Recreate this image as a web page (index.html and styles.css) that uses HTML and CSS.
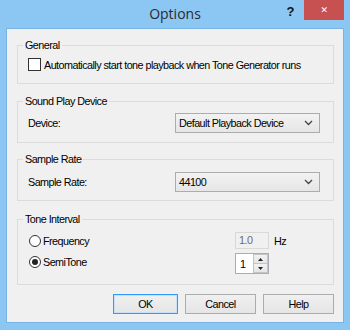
FILE: index.html
```html
<!DOCTYPE html>
<html lang="en">
<head>
    <meta charset="UTF-8">
    <title>Options</title>
    <link rel="stylesheet" href="styles.css">
</head>
<body>
    <div class="window">
        <div class="titlebar">
            <div></div>
            <div class="title">Options</div>
            <div class="controls">
                <span class="help-btn">?</span>
                <span class="close-btn">&#x2715;</span>
            </div>
        </div>
        <div class="client">
            <div class="group general">
                <div class="caption">General</div>
                <label class="row check-row">
                    <span class="checkbox"></span>
                    Automatically start tone playback when Tone Generator runs
                </label>
            </div>

            <div class="group device">
                <div class="caption">Sound Play Device</div>
                <div class="row field-row">
                    <span class="field-label">Device:</span>
                    <div class="combo">
                        <span>Default Playback Device</span>
                        <svg width="9" height="6" viewBox="0 0 9 6"><polyline points="1,1 4.5,4.5 8,1" fill="none" stroke="#444" stroke-width="1.3"/></svg>
                    </div>
                </div>
            </div>

            <div class="group rate">
                <div class="caption">Sample Rate</div>
                <div class="row field-row">
                    <span class="field-label">Sample Rate:</span>
                    <div class="combo">
                        <span>44100</span>
                        <svg width="9" height="6" viewBox="0 0 9 6"><polyline points="1,1 4.5,4.5 8,1" fill="none" stroke="#444" stroke-width="1.3"/></svg>
                    </div>
                </div>
            </div>

            <div class="group interval">
                <div class="caption">Tone Interval</div>
                <div class="row radio-row first">
                    <label class="radio-label"><span class="radio"></span>Frequency</label>
                    <div class="textbox disabled">1.0</div>
                    <span class="unit">Hz</span>
                </div>
                <div class="row radio-row second">
                    <label class="radio-label"><span class="radio checked"></span>SemiTone</label>
                    <div class="spinbox">
                        <span class="spin-value">1</span>
                        <div class="spin-buttons">
                            <span class="spin up"><svg width="5" height="3" viewBox="0 0 5 3"><polygon points="0,3 2.5,0 5,3" fill="#222"/></svg></span>
                            <span class="spin down"><svg width="5" height="3" viewBox="0 0 5 3"><polygon points="0,0 2.5,3 5,0" fill="#222"/></svg></span>
                        </div>
                    </div>
                </div>
            </div>

            <div class="buttons">
                <button class="btn default ok">OK</button>
                <button class="btn cancel">Cancel</button>
                <button class="btn help">Help</button>
            </div>
        </div>
    </div>
</body>
</html>
```

FILE: styles.css
```css
body {
    margin: 0;
    font-family: "Liberation Sans", Arial, sans-serif;
    font-size: 10.8px;
    letter-spacing: -0.55px;
    color: #000;
    white-space: nowrap;
}
.window {
    width: 350px;
    height: 330px;
    background-color: #8cc7f4;
    box-sizing: border-box;
    overflow: hidden;
}
.titlebar {
    height: 28px;
    display: grid;
    grid-template-columns: 1fr auto 1fr;
}
.title {
    font-family: "Open Sans", sans-serif;
    font-size: 14px;
    letter-spacing: 0;
    color: #2a2a2a;
    line-height: 28px;
}
.controls {
    display: flex;
    justify-content: flex-end;
    align-items: flex-start;
    margin-right: 6px;
}
.help-btn {
    font-weight: bold;
    font-size: 13px;
    color: #111;
    margin: 4px 10px 0 0;
}
.close-btn {
    width: 40px;
    height: 20px;
    background-color: #c75050;
    color: #fff;
    font-family: "DejaVu Sans", sans-serif;
    font-size: 9px;
    font-weight: bold;
    text-align: center;
    line-height: 20px;
}
.client {
    margin: 0 6px;
    height: 295px;
    box-sizing: border-box;
    background-color: #f0f0f0;
    border: 1px solid #78b3e2;
    padding: 0 9px 0 10px;
    display: flex;
    flex-direction: column;
}
.group {
    border: 1px solid #dcdcdc;
    box-sizing: border-box;
    display: flex;
    flex-direction: column;
}
.caption {
    width: fit-content;
    margin: -8px 0 0 5px;
    padding: 0 2px;
    line-height: 15px;
    background-color: #f0f0f0;
}
.general { margin-top: 16px; height: 39px; }
.device { margin-top: 17px; height: 42px; }
.rate { margin-top: 16px; height: 42px; }
.interval { margin-top: 18px; height: 66px; }

.row {
    display: flex;
    align-items: center;
}
.check-row {
    margin: 5px 0 0 10px;
    height: 13px;
}
.checkbox {
    flex-shrink: 0;
    width: 11px;
    height: 11px;
    border: 1px solid #333;
    background-color: #fff;
    margin-right: 3px;
}
.field-row {
    margin: 4px 0 0 10px;
    height: 20px;
}
.rate .field-row { margin-top: 5px; }
.field-label {
    width: 147px;
}
.combo {
    width: 145px;
    height: 20px;
    box-sizing: border-box;
    border: 1px solid #acacac;
    background: linear-gradient(#f2f2f2, #e6e6e6);
    display: flex;
    align-items: center;
    justify-content: space-between;
    padding: 0 6px 0 3px;
}
.radio-row {
    margin-left: 11px;
}
.radio-row.first { margin-top: 5px; height: 17px; }
.radio-row.second { margin-top: 4px; height: 21px; }
.radio-label {
    width: 206px;
    display: flex;
    align-items: center;
}
.radio-row.second .radio-label { margin-top: -4px; }
.radio {
    flex-shrink: 0;
    width: 10px;
    height: 10px;
    border: 1px solid #333;
    border-radius: 50%;
    background-color: #fff;
    margin-right: 2px;
    display: flex;
    align-items: center;
    justify-content: center;
}
.radio.checked::after {
    content: "";
    width: 6px;
    height: 6px;
    border-radius: 50%;
    background-color: #222;
}
.textbox {
    width: 34px;
    height: 17px;
    box-sizing: border-box;
    border: 1px solid #d9d9d9;
    padding-left: 3px;
    line-height: 15px;
}
.textbox.disabled {
    color: #6d6d6d;
    background-color: #f0f0f0;
}
.unit {
    margin-left: 5px;
}
.spinbox {
    width: 34px;
    height: 21px;
    box-sizing: border-box;
    border: 1px solid #abadb3;
    background-color: #fff;
    display: flex;
    align-items: center;
    justify-content: space-between;
    padding-left: 4px;
}
.spin-buttons {
    display: flex;
    flex-direction: column;
    align-self: stretch;
}
.spin {
    width: 15px;
    flex: 1;
    box-sizing: border-box;
    border: 1px solid #c4c4c4;
    background: linear-gradient(#f2f2f2, #e5e5e5);
    display: flex;
    align-items: center;
    justify-content: center;
}
.spin.down { border-top: none; }

.buttons {
    margin-top: 9px;
    display: flex;
    justify-content: flex-end;
    gap: 7px;
}
.btn {
    height: 20px;
    box-sizing: border-box;
    border: 1px solid #acacac;
    background: linear-gradient(#f0f0f0, #e5e5e5);
    font-family: inherit;
    font-size: inherit;
    letter-spacing: inherit;
    padding: 0;
    color: #000;
}
.ok { width: 65px; }
.cancel { width: 71px; }
.help { width: 71px; }
.btn.default {
    border-color: #3399ff;
    box-shadow: inset 0 0 0 1px #c5e1fb;
}
```
